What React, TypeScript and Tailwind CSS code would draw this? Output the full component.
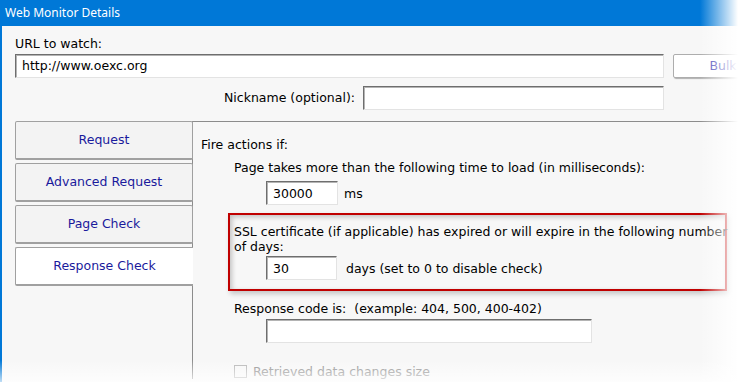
import React from 'react';

const ui = { fontFamily: '"DejaVu Sans", Tahoma, sans-serif' };

// sunken win32 edit box
function Edit({ className = '', value = '' }: { className?: string; value?: string }) {
  return (
    <div
      className={`h-[24px] shrink-0 bg-white border border-t-[#6e6e6e] border-l-[#6e6e6e] border-b-[#e3e3e3] border-r-[#e3e3e3] shadow-[inset_1px_1px_0_#b4b4b4] flex items-center pl-[6px] text-black ${className}`}
    >
      {value}
    </div>
  );
}

const tabs = ['Request', 'Advanced Request', 'Page Check', 'Response Check'];

export default function App() {
  const active = 3;

  return (
    <div className="relative w-[738px] h-[382px] overflow-hidden bg-white" style={ui}>
      <div className="flex flex-col h-full border-l-2 border-[#0078d7]">
        {/* title bar */}
        <div
          className="h-[26px] shrink-0 bg-[#0078d7] text-white text-[12px] flex items-center pl-[3px]"
          style={{ fontFamily: '"Noto Sans", "Open Sans", sans-serif' }}
        >
          Web Monitor Details
        </div>

        <div className="flex-1 bg-[#f7f7f7] pl-[13px] pt-[10px] text-[12.5px] text-black overflow-hidden">
          <div className="leading-[15px]">URL to watch:</div>
          <div className="flex gap-[9px] mt-[3px]">
            <Edit className="w-[649px]" value="http://www.oexc.org" />
            <div className="w-[100px] h-[24px] shrink-0 bg-white border border-[#adadad] rounded-[2px] shadow-[1px_1px_1px_#b0b0b0] flex items-center justify-center text-[#3c3cb4]">
              Bulk
            </div>
          </div>

          <div className="flex items-center justify-end w-[649px] mt-[8px] gap-[8px]">
            <span>Nickname (optional):</span>
            <Edit className="w-[301px]" />
          </div>

          <div className="flex mt-[11px]">
            {/* tab strip */}
            <div className="w-[178px] shrink-0 flex flex-col gap-[3px] -mr-px relative z-10">
              {tabs.map((t, i) => (
                <div
                  key={t}
                  className={
                    i === active
                      ? 'h-[39px] bg-white border border-r-0 border-[#a0a0a0] border-b-2 rounded-l-[2px] flex items-center justify-center text-[#1a1a9c]'
                      : 'h-[39px] bg-[#f3f3f3] border border-[#a0a0a0] border-b-2 rounded-[2px] flex items-center justify-center text-[#1a1a9c]'
                  }
                >
                  {t}
                </div>
              ))}
            </div>

            {/* page */}
            <div className="flex-1 border-t border-l border-[#8c8c8c] pl-[8px] pt-[15px] leading-[15px]">
              <div>Fire actions if:</div>
              <div className="pl-[33px] mt-[8px]">Page takes more than the following time to load (in milliseconds):</div>
              <div className="flex items-center pl-[65px] mt-[6px] gap-[6px]">
                <Edit className="w-[72px]" value="30000" />
                <span>ms</span>
              </div>

              <div className="ml-[27px] mt-[8px] w-[499px] h-[78px] border-2 border-[#c00000] shadow-[inset_2px_2px_5px_rgba(0,0,0,0.22),2px_3px_5px_rgba(0,0,0,0.2)] pl-[4px] pt-[9px] whitespace-nowrap">
                <div>SSL certificate (if applicable) has expired or will expire in the following number</div>
                <div>of days:</div>
                <div className="flex items-center pl-[32px] mt-[2px] gap-[9px]">
                  <Edit className="w-[71px]" value="30" />
                  <span>days (set to 0 to disable check)</span>
                </div>
              </div>

              <div className="pl-[33px] mt-[10px]">Response code is:&nbsp; (example: 404, 500, 400-402)</div>
              <div className="pl-[65px] mt-[3px]">
                <Edit className="w-[326px]" />
              </div>

              <div className="pl-[33px] mt-[21px] flex items-center gap-[6px] text-[#8c8c8c]">
                <div className="w-[13px] h-[13px] border border-[#b4b4b4] bg-[#f7f7f7]" />
                <span>Retrieved data changes size</span>
              </div>
            </div>
          </div>
        </div>
      </div>

      {/* screenshot fades */}
      <div className="absolute top-0 right-0 w-[38px] h-full bg-gradient-to-r from-white/0 to-white pointer-events-none" />
      <div className="absolute bottom-0 left-0 w-full h-[22px] bg-gradient-to-b from-white/0 to-white/75 pointer-events-none" />
    </div>
  );
}
